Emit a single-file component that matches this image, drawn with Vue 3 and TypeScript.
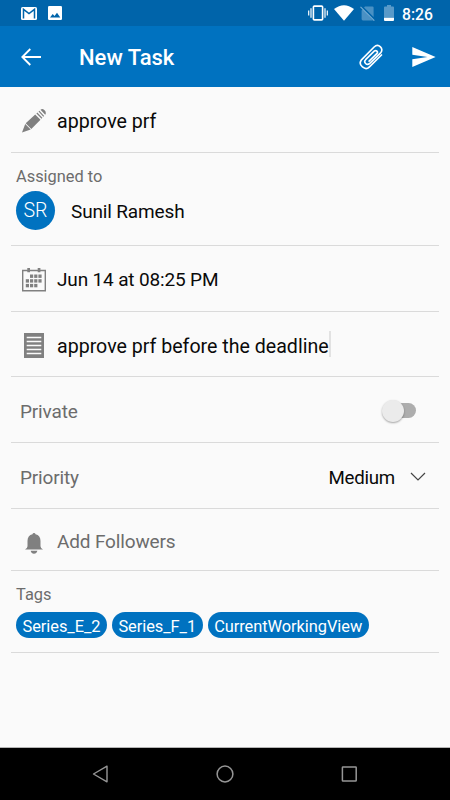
<script setup lang="ts">
import { ref } from 'vue'

interface Tag {
  id: number
  label: string
}

const title = ref('approve prf')
const assignee = { initials: 'SR', name: 'Sunil Ramesh' }
const dueDate = ref('Jun 14 at 08:25 PM')
const description = ref('approve prf before the deadline')
const isPrivate = ref(false)
const priority = ref('Medium')
const tags = ref<Tag[]>([
  { id: 1, label: 'Series_E_2' },
  { id: 2, label: 'Series_F_1' },
  { id: 3, label: 'CurrentWorkingView' },
])
const calendarDots: [number, number][] = [
  [9, 6.5], [13.2, 6.5], [17.4, 6.5],
  [4.8, 11.2], [9, 11.2], [13.2, 11.2], [17.4, 11.2],
  [4.8, 15.9], [9, 15.9], [13.2, 15.9],
]
</script>

<template>
  <div class="screen">
    <div class="status">
      <div class="status-left">
        <svg width="16" height="13" viewBox="0 0 16 13">
          <rect width="16" height="13" rx="1.5" fill="#fff" />
          <path d="M2.5 11.5V2.3L8 6.6L13.5 2.3V11.5" fill="none" stroke="#0064aa" stroke-width="1.5" />
        </svg>
        <svg width="14" height="14" viewBox="0 0 14 14">
          <rect width="14" height="14" rx="1.3" fill="#fff" />
          <path d="M2 11.5L4.7 8L6.5 10L9 6.7L12.3 11.5Z" fill="#0064aa" />
        </svg>
      </div>
      <div class="status-right">
        <svg class="vibrate" width="20" height="16" viewBox="0 0 20 16" fill="none" stroke="#fff">
          <rect x="5.4" y="1.1" width="9.2" height="13.8" rx="1" stroke-width="1.6" />
          <path d="M3 3.2V12.8M17 3.2V12.8M.7 5.5V10.5M19.3 5.5V10.5" stroke-width="1.2" />
        </svg>
        <svg class="wifi" width="20" height="16" viewBox="0 0 20 16">
          <path d="M0 4.1Q10 -3.5 20 4.1L10 15.8Z" fill="#fff" />
        </svg>
        <svg class="sim" width="15" height="15" viewBox="0 0 15 15">
          <path d="M5 .4H12.4Q13.6 .4 13.6 1.6V11L4 1.6ZM2.8 3.2L13 14.4H3Q1.6 14.4 1.6 13V4.4Z" fill="#4a91c4" />
          <path d="M.5 .8L14.3 14.7" stroke="#78aed5" stroke-width="1.1" />
        </svg>
        <svg class="battery" width="10" height="16" viewBox="0 0 10 16">
          <path d="M3 0H7V1.6H9Q10 1.6 10 2.6V12.8H0V2.6Q0 1.6 1 1.6H3Z" fill="#599ac9" />
          <path d="M0 12.8H10V15Q10 16 9 16H1Q0 16 0 15Z" fill="#fff" />
        </svg>
        <span class="clock">8:26</span>
      </div>
    </div>

    <header class="appbar">
      <svg class="back" width="20" height="18" viewBox="0 0 20 18" fill="none" stroke="#fff" stroke-width="1.8">
        <path d="M9.3 1L1.3 9L9.3 17M1.3 9H20" />
      </svg>
      <h1>New Task</h1>
      <svg class="clip" width="24" height="26" viewBox="0 0 24 26" fill="none" stroke="#fff" stroke-width="1.65" stroke-linecap="round" stroke-linejoin="round">
        <path d="M22.5 11L10.2 23.1C6.2 27 -1.2 21.2 2.2 16.2L15.1 3C19.5-1.2 25.4 4.9 21.6 8.8L10.8 19.4C7.6 22.1 4.2 18.2 6.6 15.7L15.2 7.2C17.2 5.6 19.5 7.9 17.8 9.7L10.1 17.1" />
      </svg>
      <svg class="send" width="24" height="20" viewBox="0 0 24 20">
        <path d="M.3 0L23.6 9.9L.3 20V12.2L15.5 9.9L.3 7.7Z" fill="#fff" />
      </svg>
    </header>

    <main class="form">
      <section class="row title-row">
        <span class="icon">
          <svg width="24" height="24" viewBox="0 0 24 24" fill="#808080">
            <path d="M0 23.6L3.2 15L8.7 20.5ZM3.7 14.3L13.2 5.4L18.5 10.7L9.3 19.9ZM14.4 4.4L15.3 3.5L20.4 8.8L19.5 9.7ZM16.5 2.5L17.4 1.7L22.2 6.9L21.3 7.8ZM18.5 .8Q20.4-.7 22.3 1.1Q24.8 3.3 23.2 5.8Z" />
          </svg>
        </span>
        <span class="text entry">{{ title }}</span>
      </section>

      <section class="row assigned">
        <span class="label">Assigned to</span>
        <div class="person">
          <span class="avatar">{{ assignee.initials }}</span>
          <span class="name">{{ assignee.name }}</span>
        </div>
      </section>

      <section class="row date-row">
        <span class="icon">
          <svg width="24" height="24" viewBox="0 0 24 24" fill="#808080">
            <path d="M.7 2.5H23.3V22.8H.7Z" fill="none" stroke="#808080" stroke-width="1.4" />
            <path d="M5.3 0H8V4.3H5.3ZM15.7 0H18.4V4.3H15.7Z" />
            <rect v-for="([x, y], i) in calendarDots" :key="i" :x="x - 1" :y="y" width="3.2" height="3.4" />
          </svg>
        </span>
        <span class="text date">{{ dueDate }}</span>
      </section>

      <section class="row description">
        <span class="icon">
          <svg width="20" height="25" viewBox="0 0 20 25">
            <rect width="20" height="25" fill="#808080" />
            <path d="M2.7 4.5H17.3M2.7 8.5H17.3M2.7 12.5H17.3M2.7 16.5H17.3M2.7 20.5H17.3" stroke="#fafafa" stroke-width="1.3" />
          </svg>
        </span>
        <span class="text entry">{{ description }}</span>
        <span class="caret"></span>
      </section>

      <section class="row option">
        <span class="option-label">Private</span>
        <span class="switch" :class="{ on: isPrivate }" role="switch" :aria-checked="isPrivate" @click="isPrivate = !isPrivate">
          <span class="thumb"></span>
        </span>
      </section>

      <section class="row option priority-row">
        <span class="option-label">Priority</span>
        <span class="priority">{{ priority }}</span>
        <svg class="chevron" width="16" height="10" viewBox="0 0 16 10" fill="none" stroke="#444" stroke-width="1.2">
          <path d="M1 1L8 8L15 1" />
        </svg>
      </section>

      <section class="row followers">
        <span class="icon">
          <svg width="18" height="21" viewBox="0 0 18 21" fill="#808080">
            <path d="M9 0Q10.3 0 10.5 1.3Q15.5 2.5 15.5 8V13.3Q15.5 15 18 16.5H0Q2.5 15 2.5 13.3V8Q2.5 2.5 7.5 1.3Q7.7 0 9 0ZM5.6 17.8H12.4Q11.6 20.7 9 20.7Q6.4 20.7 5.6 17.8Z" />
          </svg>
        </span>
        <span class="text muted">Add Followers</span>
      </section>

      <section class="row tags-row">
        <span class="label">Tags</span>
        <div class="tags">
          <span v-for="tag in tags" :key="tag.id" class="tag">{{ tag.label }}</span>
        </div>
      </section>
    </main>

    <nav class="navbar">
      <svg width="17" height="18" viewBox="0 0 17 18" fill="none" stroke="#969696" stroke-width="1.4" stroke-linejoin="round">
        <path d="M15 1.2V16.8L1.5 9Z" />
      </svg>
      <svg width="18" height="18" viewBox="0 0 18 18" fill="none" stroke="#969696" stroke-width="1.5">
        <circle cx="9" cy="9" r="7.9" />
      </svg>
      <svg width="17" height="18" viewBox="0 0 17 18" fill="none" stroke="#969696" stroke-width="1.5">
        <rect x="1.4" y="2" width="13.8" height="14" rx="0.6" />
      </svg>
    </nav>
  </div>
</template>

<style>
body {
  margin: 0;
  background: #fafafa;
}
</style>

<style scoped>
.screen {
  display: flex;
  flex-direction: column;
  width: 450px;
  height: 800px;
  overflow: hidden;
  background: #fafafa;
  color: #0a0a0a;
  font-family: Roboto, "Liberation Sans", sans-serif;
}
svg {
  display: block;
  flex: none;
}
.status {
  display: flex;
  justify-content: space-between;
  box-sizing: border-box;
  height: 26px;
  padding: 0 17px 0 21px;
  background: #0064aa;
}
.status-left,
.status-right {
  display: flex;
  align-items: center;
}
.status-left {
  gap: 11px;
}
.wifi {
  margin-left: 6px;
}
.sim {
  margin-left: 6px;
}
.battery {
  margin-left: 9px;
}
.clock {
  width: 31px;
  margin-left: 8px;
  padding-top: 3px;
  color: #fff;
  font-size: 15.7px;
  font-weight: 500;
  line-height: 23px;
  white-space: nowrap;
}
.appbar {
  display: flex;
  align-items: center;
  box-sizing: border-box;
  height: 61px;
  padding: 0 14px 0 21px;
  background: #0072c0;
  color: #fff;
}
h1 {
  flex: 1;
  margin: 0 0 0 38px;
  padding-top: 3px;
  font-size: 22px;
  font-weight: 500;
  line-height: 30px;
}
.send {
  margin-left: 29px;
}
.form {
  flex: 1;
  padding: 0 11px;
}
.row {
  display: flex;
  align-items: center;
  box-sizing: border-box;
  height: 66px;
  border-bottom: 1px solid #dadada;
}
.title-row {
  padding-top: 3px;
}
.icon {
  display: flex;
  justify-content: center;
  width: 24px;
  margin: 0 11px;
}
.text,
.name,
.option-label,
.priority {
  font-size: 19px;
  letter-spacing: -0.15px;
  line-height: 26px;
  white-space: nowrap;
}
.name,
.option-label,
.priority,
.text.entry {
  padding-top: 2px;
}
.text.entry {
  font-size: 19.6px;
  letter-spacing: 0;
}
.row.date-row {
  padding-top: 2px;
}
.row.assigned,
.row.tags-row {
  flex-direction: column;
  align-items: flex-start;
  padding-left: 5px;
}
.row.assigned {
  height: 93px;
  padding-top: 14px;
}
.label {
  color: #6c6c6c;
  font-size: 16.4px;
  line-height: 20px;
}
.person {
  display: flex;
  align-items: center;
  margin-top: 4px;
}
.avatar {
  width: 39px;
  height: 39px;
  border-radius: 50%;
  background: #0072c0;
  color: #fff;
  font-size: 19.6px;
  font-weight: 300;
  line-height: 40px;
  text-align: center;
}
.name {
  margin-left: 16px;
}
.row.description {
  height: 65px;
  padding-top: 3px;
}
.caret {
  width: 2px;
  height: 26px;
  margin-top: -4px;
  background: #e2e2e2;
}
.row.option {
  padding: 2px 23px 0 9px;
}
.option-label,
.muted {
  color: #6c6c6c;
}
.switch {
  display: flex;
  align-items: center;
  box-sizing: border-box;
  width: 26px;
  height: 15px;
  margin-left: auto;
  border-radius: 8px;
  background: #adadad;
}
.thumb {
  flex: none;
  width: 22px;
  height: 22px;
  margin-left: -8px;
  border-radius: 50%;
  background: #ebebeb;
  box-shadow: 0 1px 2px rgba(0, 0, 0, 0.35);
}
.switch.on .thumb {
  margin-left: 12px;
}
.row.priority-row {
  padding-right: 13px;
}
.priority {
  margin-left: auto;
  font-size: 18.7px;
  letter-spacing: -0.25px;
}
.chevron {
  margin-left: 15px;
}
.row.followers {
  height: 62px;
  padding-top: 4px;
}
.followers .icon {
  padding-top: 3px;
}
.row.tags-row {
  height: 82px;
  padding-top: 14px;
}
.tags {
  display: flex;
  gap: 5px;
  margin-top: 7px;
}
.tag {
  height: 26px;
  padding: 0 6.5px;
  border-radius: 13px;
  background: #0072c0;
  color: #fff;
  font-size: 16.4px;
  letter-spacing: -0.05px;
  line-height: 29px;
  white-space: nowrap;
}
.navbar {
  display: flex;
  align-items: center;
  justify-content: space-between;
  box-sizing: border-box;
  height: 53px;
  padding: 0 92px;
  border-top: 1px solid #b4b4b4;
  background: #000;
}
</style>
